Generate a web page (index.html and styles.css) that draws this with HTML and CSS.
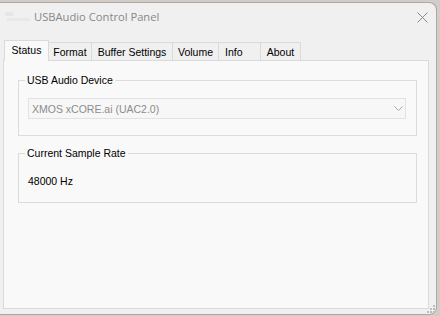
FILE: index.html
```html
<!DOCTYPE html>
<html>
<head>
<meta charset="utf-8">
<link rel="stylesheet" href="styles.css">
</head>
<body>
<div class="window">
  <div class="titlebar">
    <svg class="app-icon" width="25" height="10" viewBox="0 0 25 10">
      <rect x="0" y="0" width="8" height="4" fill="#e6e6e6"/>
      <rect x="2" y="6" width="23" height="3" fill="#e8e8e8"/>
    </svg>
    <span class="title">USBAudio Control Panel</span>
    <svg class="close" width="11" height="11" viewBox="0 0 11 11">
      <path d="M0.5 0.5 L10.5 10.5 M10.5 0.5 L0.5 10.5" stroke="#8a8a8a" stroke-width="1" fill="none"/>
    </svg>
  </div>
  <div class="tabs">
    <div class="tab tab--active tab--status">Status</div>
    <div class="tab tab--format">Format</div>
    <div class="tab tab--buffer">Buffer Settings</div>
    <div class="tab tab--volume">Volume</div>
    <div class="tab tab--info">Info</div>
    <div class="tab tab--about">About</div>
  </div>
  <div class="page">
    <fieldset class="group group--device">
      <legend>USB Audio Device</legend>
      <div class="combo">
        <span class="combo-text">XMOS xCORE.ai (UAC2.0)</span>
        <svg class="chevron" width="9" height="5" viewBox="0 0 9 5">
          <path d="M0.5 0.5 L4.5 4.5 L8.5 0.5" stroke="#a8a8a8" stroke-width="1" fill="none"/>
        </svg>
      </div>
    </fieldset>
    <fieldset class="group group--rate">
      <legend>Current Sample Rate</legend>
      <div class="value">48000 Hz</div>
    </fieldset>
  </div>
  <svg class="grip" width="8" height="8" viewBox="0 0 8 8">
    <rect x="6" y="0" width="2" height="2" fill="#bdbdbd"/>
    <rect x="3" y="3" width="2" height="2" fill="#bdbdbd"/>
    <rect x="6" y="3" width="2" height="2" fill="#bdbdbd"/>
    <rect x="0" y="6" width="2" height="2" fill="#bdbdbd"/>
    <rect x="3" y="6" width="2" height="2" fill="#bdbdbd"/>
    <rect x="6" y="6" width="2" height="2" fill="#bdbdbd"/>
  </svg>
</div>
</body>
</html>
```
FILE: styles.css
```css
html, body {
  margin: 0;
  padding: 0;
}
body {
  background: #d3ccc7;
  width: 440px;
  height: 316px;
  overflow: hidden;
  font-family: "Liberation Sans", Arial, sans-serif;
  font-size: 10.5px;
  color: #000;
}
.window {
  position: relative;
  margin-top: 2px;
  width: 437px;
  height: 313px;
  box-sizing: border-box;
  border: 1px solid #a9a9a9;
  border-left: none;
  border-radius: 0 8px 8px 0;
  background: #f0f0f0;
  display: flex;
  flex-direction: column;
}
.titlebar {
  height: 28px;
  display: flex;
  align-items: center;
  padding-left: 5px;
  flex: none;
}
.app-icon {
  display: block;
  margin-right: 4px;
}
.title {
  font-family: "Open Sans", "Noto Sans", sans-serif;
  font-size: 11.2px;
  color: #888;
  line-height: 14px;
}
.close {
  display: block;
  margin-left: auto;
  margin-right: 8px;
}
.tabs {
  margin-top: 9px;
  height: 20px;
  padding-left: 4px;
  display: flex;
  align-items: flex-end;
  flex: none;
}
.tab {
  box-sizing: border-box;
  height: 18px;
  border: 1px solid #dadada;
  border-bottom: none;
  background: #f0f0f0;
  line-height: 12px;
  padding-top: 3px;
  text-align: center;
  white-space: nowrap;
  margin-left: -1px;
}
.tab--active {
  position: relative;
  z-index: 1;
  height: 21px;
  margin-bottom: -1px;
  margin-left: 0;
  padding-top: 3px;
  background: #f9f9f9;
}
.tab--status { width: 45px; }
.tab--format { width: 44px; }
.tab--buffer { width: 82px; }
.tab--volume { width: 47px; }
.tab--info { width: 43px; text-align: left; padding-left: 6px; }
.tab--about { width: 41px; }
.page {
  flex: 1;
  margin: 0 7px 5px 3px;
  border: 1px solid #dadada;
  background: #f9f9f9;
  padding: 0 11px 0 14px;
}
.group {
  margin: 13px 0 0;
  border: 1px solid #dcdcdc;
  min-width: 0;
}
.group legend {
  padding: 0 2px;
  margin-left: -3px;
  line-height: 12px;
}
.group--device {
  padding: 12px 10px 16px 9px;
}
.group--rate {
  margin-top: 11px;
  padding: 16px 10px 15px 9px;
}
.combo {
  box-sizing: border-box;
  height: 21px;
  border: 1px solid #e2e2e2;
  background: #f7f7f7;
  display: flex;
  align-items: center;
  justify-content: space-between;
  padding: 0 2px 0 3px;
}
.combo-text {
  color: #8c8c8c;
  line-height: 12px;
}
.chevron {
  display: block;
}
.value {
  line-height: 12px;
}
.grip {
  position: absolute;
  right: 1px;
  bottom: 1px;
}
```
